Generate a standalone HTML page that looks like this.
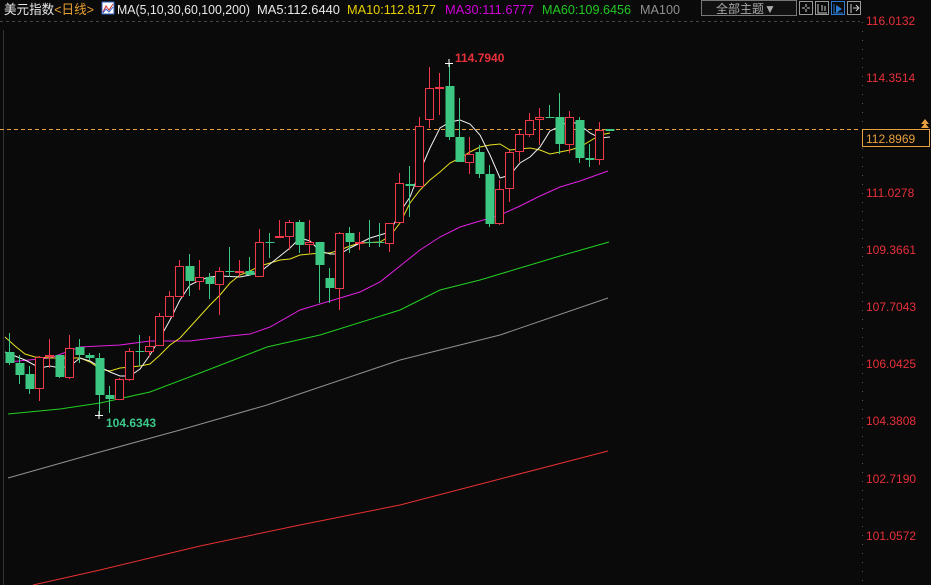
<!DOCTYPE html>
<html><head><meta charset="utf-8"><style>
html,body{margin:0;padding:0;background:#0a0a0a;width:931px;height:585px;overflow:hidden}
svg{display:block}
text{font-family:"Liberation Sans","Noto Sans CJK SC",sans-serif}
</style></head><body>
<svg width="931" height="585" viewBox="0 0 931 585" xmlns="http://www.w3.org/2000/svg">
<rect width="931" height="585" fill="#0a0a0a"/>
<!-- header -->
<text x="4" y="14" font-size="13" fill="#e8e8e8" textLength="90" lengthAdjust="spacingAndGlyphs">美元指数<tspan fill="#e8a030">&lt;日线&gt;</tspan></text>
<rect x="102" y="2" width="12" height="12" fill="#fff" stroke="#3060c0"/>
<polyline points="103,12 106,6 109,10 113,4" fill="none" stroke="#d03030" stroke-width="1"/>
<polyline points="103,13 106,9 109,12 113,7" fill="none" stroke="#3060d0" stroke-width="1"/>
<text x="117" y="14" font-size="13" fill="#e8e8e8" textLength="133" lengthAdjust="spacingAndGlyphs">MA(5,10,30,60,100,200)</text>
<text x="257" y="14" font-size="13" fill="#e8e8e8" textLength="83" lengthAdjust="spacingAndGlyphs">MA5:112.6440</text>
<text x="347" y="14" font-size="13" fill="#e8d000" textLength="89" lengthAdjust="spacingAndGlyphs">MA10:112.8177</text>
<text x="445" y="14" font-size="13" fill="#d000d8" textLength="89" lengthAdjust="spacingAndGlyphs">MA30:111.6777</text>
<text x="542" y="14" font-size="13" fill="#22c822" textLength="89" lengthAdjust="spacingAndGlyphs">MA60:109.6456</text>
<text x="640" y="14" font-size="13" fill="#909090" textLength="40" lengthAdjust="spacingAndGlyphs">MA100</text>
<rect x="701.5" y="0.5" width="95" height="15" fill="#111" stroke="#777"/>
<text x="716" y="13" font-size="12" fill="#aaa">全部主题▼</text>
<rect x="799.5" y="1.5" width="13" height="13" fill="none" stroke="#999"/>
<path d="M806 4v3M806 9v3M802 8h3M807 8h3" stroke="#ccc"/>
<rect x="815.5" y="1.5" width="13" height="13" fill="none" stroke="#999"/>
<path d="M818 4v9h9M822 5v6M825 6v5" stroke="#ccc"/>
<rect x="831.5" y="1.5" width="13" height="13" fill="none" stroke="#2a7bd0"/>
<path d="M834 4v9h9" stroke="#2a7bd0"/><path d="M836 5l6 4-6 4z" fill="#2a7bd0"/>
<rect x="847.5" y="1.5" width="13" height="13" fill="none" stroke="#999"/>
<path d="M851 4v9M853 8h5M856 5l3 3-3 3" stroke="#ccc" fill="none"/>
<!-- grid / axes -->
<line x1="0" y1="21.5" x2="860" y2="21.5" stroke="#444" stroke-dasharray="3,3"/>
<line x1="862.5" y1="22" x2="862.5" y2="585" stroke="#555" stroke-dasharray="1,8"/>
<line x1="3.5" y1="30" x2="3.5" y2="585" stroke="#333"/>
<line x1="0" y1="129.5" x2="860" y2="129.5" stroke="#e8a040" stroke-dasharray="4,3"/>
<!-- axis labels -->
<g font-size="12" fill="#e8303a">
<text x="866" y="25">116.0132</text>
<text x="866" y="82">114.3514</text>
<text x="866" y="197">111.0278</text>
<text x="866" y="254">109.3661</text>
<text x="866" y="311">107.7043</text>
<text x="866" y="368">106.0425</text>
<text x="866" y="425">104.3808</text>
<text x="866" y="483">102.7190</text>
<text x="866" y="540">101.0572</text>
</g>
<rect x="862.5" y="129.5" width="67" height="17" fill="#0a0a0a" stroke="#e8a040"/>
<text x="866" y="143" font-size="12" fill="#e8a040">112.8969</text>
<path d="M921 128l4-5 4 5zM921 124l4-5 4 5z" fill="#e8a040"/>
<!-- MA lines -->
<polyline fill="none" stroke="#e83030" stroke-width="1" points="33,585 100,570 200,546 300,525 400,505 500,479 608,451"/>
<polyline fill="none" stroke="#909090" stroke-width="1" points="8,478 100,452 180,430 267,405 320,387 400,360 500,335 608,298"/>
<polyline fill="none" stroke="#22d022" stroke-width="1" points="8,414 60,409 100,403 150,392 200,373 267,347 320,335 400,310 440,290 480,280 520,268 560,256 609,242"/>
<polyline fill="none" stroke="#e020e0" stroke-width="1" points="8,362 50,358 80,347 120,345 150,341 190,341 230,336 250,334 270,327 300,310 330,301 360,292 380,282 400,266 420,250 440,237 460,227 480,221 500,215 520,206 540,196 560,187 580,181 608,171"/>
<polyline fill="none" stroke="#e8e020" stroke-width="1" points="5,337 15,346 25,354 35,357 50,358 80,358 90,362 100,369 110,371 120,368 140,366 150,364 160,355 170,345 180,338 190,327 200,316 210,305 220,295 230,283 240,275 250,271 260,266 270,263 280,260 290,259 300,255 320,253 330,253 340,250 350,246 360,243 380,242 390,236 400,223 410,203 420,190 430,180 440,172 450,163 460,158 470,152 480,147 490,145 500,144 510,150 530,148 540,150 550,154 560,152 570,150 580,147 590,141 600,135 610,133"/>
<polyline fill="none" stroke="#f0f0f0" stroke-width="1" points="5,352 10,354 25,360 40,368 50,366 60,368 70,366 80,358 90,361 100,367 110,372 120,376 130,376 140,369 150,355 160,338 170,320 180,300 190,285 200,280 210,277 220,276 240,277 250,275 260,272 270,264 280,256 290,248 300,238 310,241 320,251 330,254 340,254 350,248 360,243 370,238 380,235 390,232 400,212 410,197 420,171 430,148 440,128 450,122 460,120 470,124 480,135 490,155 500,178 510,175 520,163 530,157 540,147 550,131 560,126 570,121 580,125 590,133 600,138 610,137"/>
<!-- candles -->
<g id="c" stroke-width="1"></g>
<text x="106" y="427" font-size="12" font-weight="bold" fill="#3cc88a">104.6343</text>
<text x="455" y="62" font-size="12" font-weight="bold" fill="#e8303a">114.7940</text>
<path d="M95 415.5h8M99 411v8M445 63.5h8M449 59v8" stroke="#fff"/>
</svg>
<script>
var d=[
[9,'G',352,363,333,365],[19,'G',363,375,355,384],[29,'G',374,389,366,394],[39,'R',357,388,356,401],
[49,'R',355,356,339,368],[59,'G',355,377,355,378],[69,'R',348,377,335,379],[79,'G',347,355,339,363],
[89,'G',355,358,353,360],[99,'G',358,395,353,415],[109,'G',395,399,386,413],[119,'R',379,399,378,400],
[129,'R',351,379,348,381],[139,'G',351,352,335,366],[149,'R',346,351,336,357],[159,'R',316,345,313,346],
[169,'R',296,316,291,317],[179,'R',266,296,260,296],[189,'G',266,281,254,296],[199,'R',277,281,260,290],
[209,'G',277,284,273,299],[219,'R',271,284,267,315],[229,'G',271,272,247,277],[239,'R',271,272,260,277],
[249,'G',271,275,257,275],[259,'R',242,276,229,276],[269,'G',242,243,233,258],[279,'R',236,237,220,238],
[289,'R',222,236,220,250],[299,'G',222,245,220,253],[309,'R',242,244,220,253],[319,'G',242,265,242,303],
[329,'G',278,288,268,303],[339,'R',233,288,232,310],[349,'G',233,242,227,253],[359,'R',242,243,232,250],
[369,'G',242,243,220,247],[379,'G',242,243,223,247],[389,'R',223,243,223,252],[399,'R',183,222,173,223],
[409,'G',184,186,166,217],[419,'R',126,186,117,187],[429,'R',88,119,67,128],[439,'R',87,88,73,115],
[449,'G',86,137,63,140],[459,'G',137,162,98,162],[469,'R',154,162,137,174],[479,'G',152,174,145,178],
[489,'G',174,224,165,227],[499,'R',189,223,180,225],[509,'R',152,188,150,202],[519,'R',134,151,130,162],
[529,'R',120,134,113,137],[539,'R',117,119,108,145],[549,'G',117,118,105,118],[559,'G',117,144,93,154],
[569,'R',117,144,111,153],[579,'G',120,158,117,163],[589,'G',158,160,144,167],[599,'R',130,159,122,165],
[609,'G',129,131,129,131]];
var s='';
d.forEach(function(c){var x=c[0],col=c[1]=='R'?'#f03848':'#3cc882';
s+='<line x1="'+(x+.5)+'" y1="'+c[4]+'" x2="'+(x+.5)+'" y2="'+c[5]+'" stroke="'+col+'"/>';
var h=Math.max(c[3]-c[2],1);
if(c[1]=='R')s+='<rect x="'+(x-3.5)+'" y="'+(c[2]+.5)+'" width="8" height="'+h+'" fill="#0a0a0a" stroke="'+col+'"/>';
else s+='<rect x="'+(x-3.5)+'" y="'+c[2]+'" width="9" height="'+h+'" fill="'+col+'"/>';});
document.getElementById('c').innerHTML=s;
</script>
</body></html>
